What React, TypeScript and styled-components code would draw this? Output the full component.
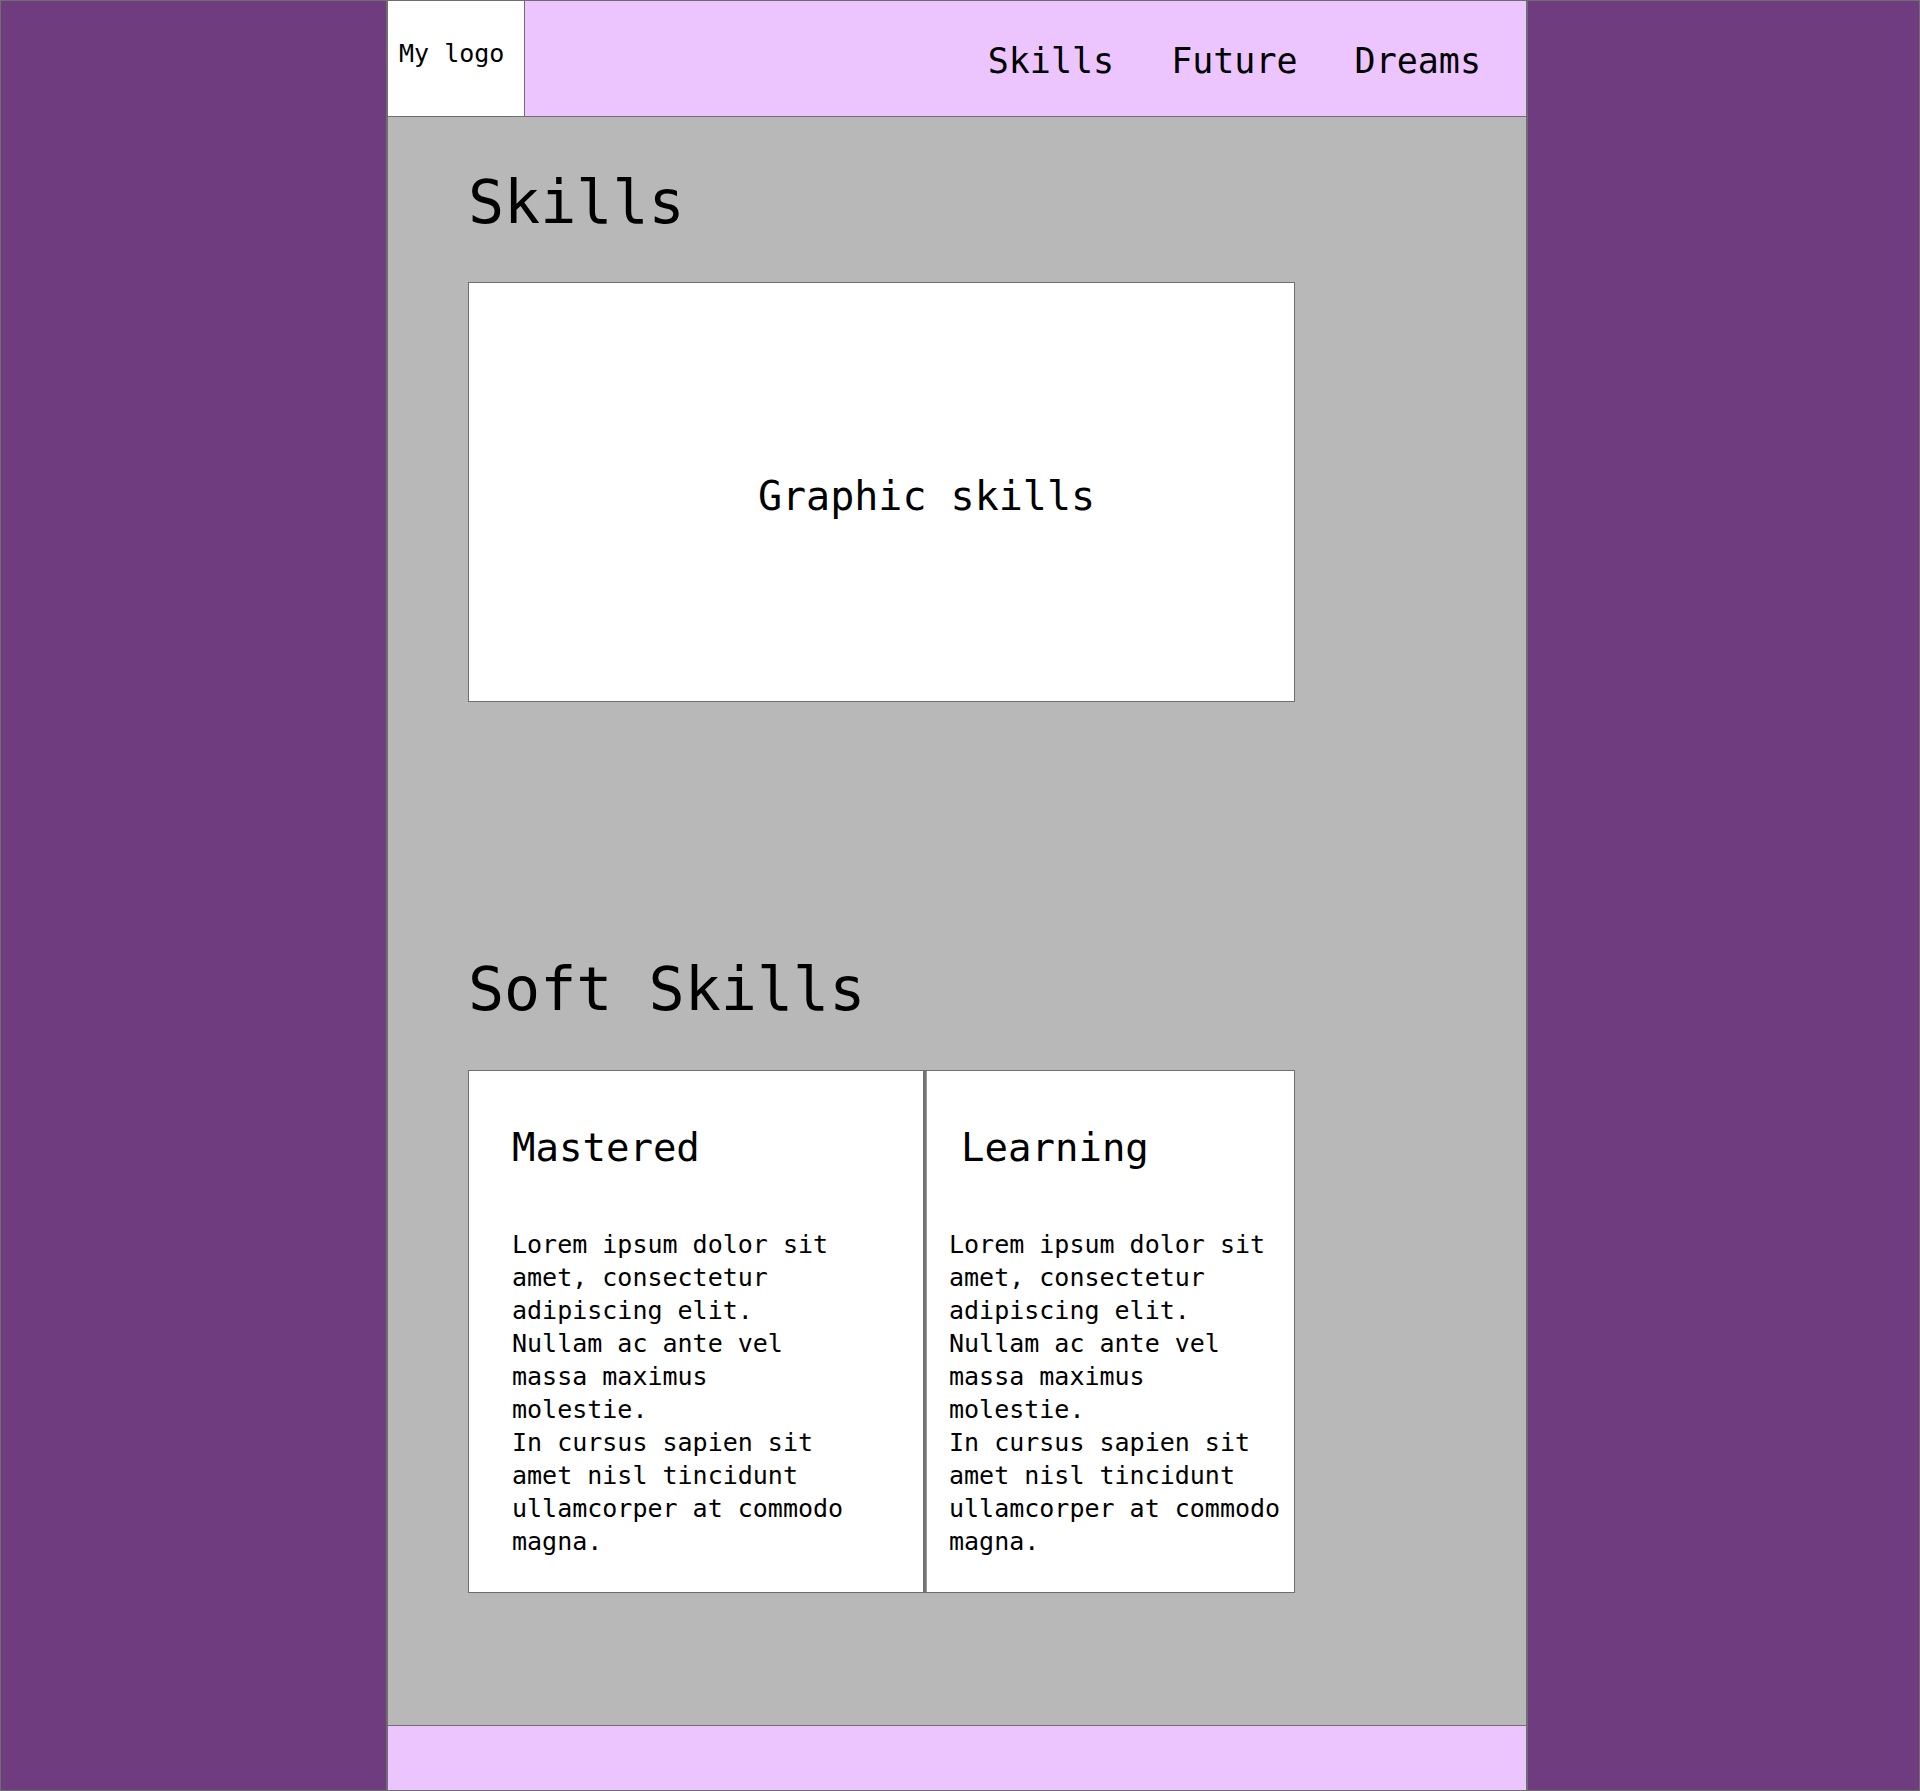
import styled, {createGlobalStyle} from "styled-components";

const GlobalStyle = createGlobalStyle`
  html, body {
    margin: 0;
    padding: 0;
  }
  body {
    background: #6f3c80;
    font-family: "DejaVu Sans Mono", "Liberation Mono", monospace;
    color: #000;
  }
  * {
    box-sizing: border-box;
  }
`;

const navItems = ['Skills', 'Future', 'Dreams'];

const softCards = [
    {title: 'Mastered', pad: 43, indent: 0},
    {title: 'Learning', pad: 23, indent: 12},
];

function App() {
    return (
        <>
            <GlobalStyle/>
            <Page>
                <Column>
                    <Header>
                        <Logo>My logo</Logo>
                        <Nav>
                            {navItems.map(item => <NavItem key={item} href="#">{item}</NavItem>)}
                        </Nav>
                    </Header>
                    <Main>
                        <Title>Skills</Title>
                        <GraphicBox>Graphic skills</GraphicBox>
                        <Title $top={252}>Soft Skills</Title>
                        <SoftGrid>
                            {softCards.map((card, i) => (
                                <SoftCard key={card.title} $pad={card.pad} $divider={i === 0}>
                                    <CardTitle $indent={card.indent}>{card.title}</CardTitle>
                                    <CardText>
                                        Lorem ipsum dolor sit amet, consectetur adipiscing elit. Nullam ac ante vel massa maximus molestie.
                                    </CardText>
                                    <CardText>
                                        In cursus sapien sit amet nisl tincidunt ullamcorper at commodo magna.
                                    </CardText>
                                </SoftCard>
                            ))}
                        </SoftGrid>
                    </Main>
                    <Footer/>
                </Column>
            </Page>
        </>
    );
}

const Page = styled.div`
  min-height: 100vh;
  border: 1px solid #6e6e6e;
  display: flex;
`;

const Column = styled.div`
  width: 1142px;
  margin-left: 385px;
  border-left: 2px solid #6e6e6e;
  border-right: 2px solid #6e6e6e;
  background: #b8b8b8;
  display: flex;
  flex-direction: column;
`;

const Header = styled.header`
  height: 116px;
  background: #ecc5fe;
  border-bottom: 1px solid #6e6e6e;
  display: flex;
  justify-content: space-between;
`;

const Logo = styled.div`
  width: 137px;
  padding: 38px 0 0 11px;
  background: #fff;
  border-right: 1px solid #6e6e6e;
  font-size: 25px;
  line-height: 30px;
`;

const Nav = styled.nav`
  display: flex;
  align-items: flex-start;
  gap: 57px;
  padding: 38px 45px 0 0;
`;

const NavItem = styled.a`
  font-size: 35px;
  line-height: 44px;
  color: #000;
  text-decoration: none;
`;

const Main = styled.main`
  flex: 1;
  padding: 50px 0 0 80px;
  display: flex;
  flex-direction: column;
  align-items: flex-start;
`;

const Title = styled.h1<{ $top?: number }>`
  margin: ${p => p.$top ?? 0}px 0 45px;
  font-size: 60px;
  line-height: 70px;
  font-weight: normal;
`;

const GraphicBox = styled.div`
  width: 827px;
  height: 420px;
  background: #fff;
  border: 1px solid #6e6e6e;
  display: flex;
  align-items: center;
  justify-content: center;
  padding: 7px 0 0 90px;
  font-size: 40px;
`;

const SoftGrid = styled.div`
  width: 827px;
  margin-top: 1px;
  background: #fff;
  border: 1px solid #6e6e6e;
  display: grid;
  grid-template-columns: 457px 1fr;
`;

const SoftCard = styled.div<{ $pad: number; $divider: boolean }>`
  padding: 53px 8px 34px ${p => p.$pad}px;
  border-right: ${p => p.$divider ? '3px solid #737373' : 'none'};
  box-shadow: ${p => p.$divider ? '1px 0 0 #9a9a9a' : 'none'};
`;

const CardTitle = styled.h3<{ $indent: number }>`
  margin: 0 0 57px ${p => p.$indent}px;
  font-size: 39px;
  line-height: 47px;
  font-weight: normal;
`;

const CardText = styled.p`
  margin: 0;
  max-width: 340px;
  font-size: 25px;
  line-height: 33px;
`;

const Footer = styled.footer`
  height: 65px;
  background: #ecc5fe;
  border-top: 1px solid #6e6e6e;
`;

export default App;
